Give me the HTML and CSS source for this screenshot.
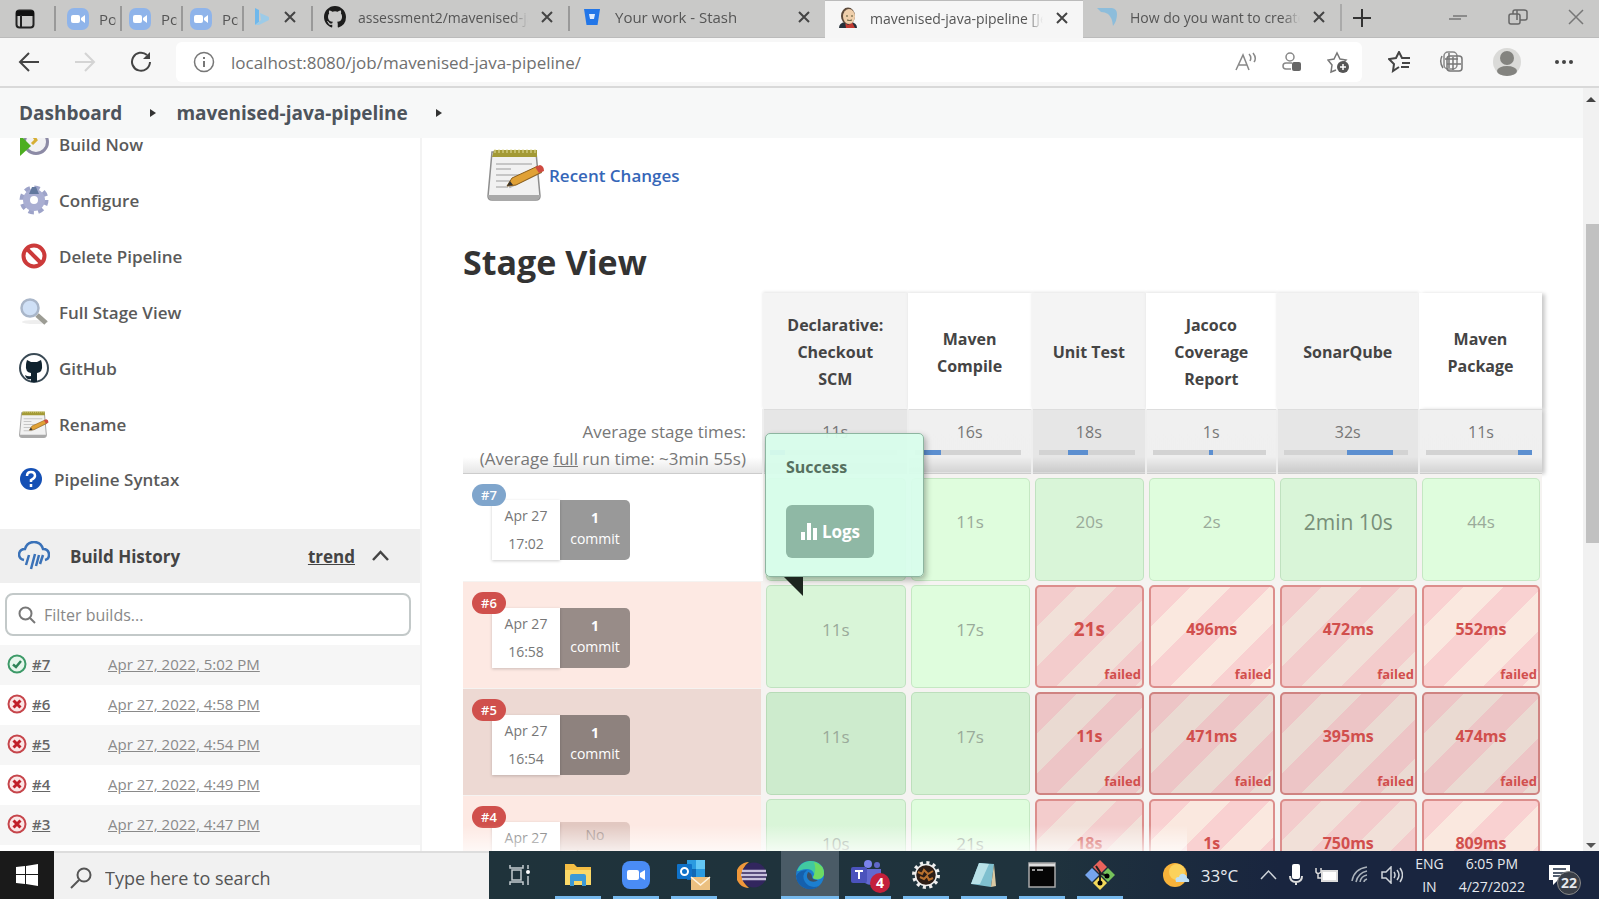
FILE: index.html
```html
<!DOCTYPE html>
<html lang="en">
<head>
<meta charset="utf-8">
<title>mavenised-java-pipeline [Jenkins]</title>
<link rel="stylesheet" href="styles.css">
</head>
<body>
<svg class="defs" aria-hidden="true">
  <symbol id="x" viewBox="0 0 14 14"><path d="M2 2l10 10M12 2L2 12" stroke="currentColor" stroke-width="2" fill="none"/></symbol>
  <symbol id="cam" viewBox="0 0 22 22"><rect width="22" height="22" rx="7" fill="#8fb4ea"/><rect x="4" y="7" width="9" height="8" rx="2" fill="#fff"/><path d="M14 10l4-3v8l-4-3z" fill="#fff"/></symbol>
  <symbol id="octo" viewBox="0 0 16 16"><path d="M8 0C3.58 0 0 3.58 0 8c0 3.54 2.29 6.53 5.47 7.59.4.07.55-.17.55-.38 0-.19-.01-.82-.01-1.49-2.01.37-2.53-.49-2.69-.94-.09-.23-.48-.94-.82-1.13-.28-.15-.68-.52-.01-.53.63-.01 1.08.58 1.23.82.72 1.21 1.87.87 2.33.66.07-.52.28-.87.51-1.07-1.78-.2-3.64-.89-3.64-3.95 0-.87.31-1.59.82-2.15-.08-.2-.36-1.02.08-2.12 0 0 .67-.21 2.2.82a7.6 7.6 0 0 1 4 0c1.53-1.04 2.2-.82 2.2-.82.44 1.1.16 1.92.08 2.12.51.56.82 1.27.82 2.15 0 3.07-1.87 3.75-3.65 3.95.29.25.54.73.54 1.48 0 1.07-.01 1.93-.01 2.2 0 .21.15.46.55.38A8 8 0 0 0 16 8c0-4.42-3.58-8-8-8z" fill="currentColor"/></symbol>
  <symbol id="note" viewBox="0 0 58 56"><path d="M5 5h44l4 44q0 4-4 4H5q-4 0-4-4z" fill="#f1f1f1" stroke="#8d8d8d" stroke-width="1.5"/><path d="M1 48q0 5 4 5h44q4 0 4-5z" fill="#a9a9a9"/><path d="M7 3h43v7H5z" fill="#a39a35"/><path d="M8 2v4m4-4v4m4-4v4m4-4v4m4-4v4m4-4v4m4-4v4m4-4v4m4-4v4m4-4v4m4-4v4" stroke="#e4dfa0" stroke-width="1"/><path d="M9 17h36M9 22h15M9 28h24M9 34h15M9 40h12" stroke="#c6c6c6" stroke-width="2"/><path d="M22 40l32-15" stroke="#777" stroke-width="3" opacity=".5"/><path d="M20 39l5-8 26-12 4 6-26 13z" fill="#e0a136" stroke="#8b5e1b" stroke-width="1"/><path d="M48 20l5-2q4 1 4 6l-5 2z" fill="#cf4b40"/><path d="M20 39l3-5 3 4z" fill="#333"/></symbol>
  <symbol id="ok" viewBox="0 0 20 20"><circle cx="10" cy="10" r="8.5" fill="#e6f6ec" stroke="#3d9a68" stroke-width="2"/><path d="M6 10.500l3 2.500 5-6" fill="none" stroke="#2f8458" stroke-width="2.500"/></symbol>
  <symbol id="bad" viewBox="0 0 20 20"><circle cx="10" cy="10" r="8.5" fill="#fbe6e6" stroke="#c6454b" stroke-width="2"/><path d="M6.500 6.500l7 7m0-7l-7 7" fill="none" stroke="#c11f29" stroke-width="3"/></symbol>
</svg>

<div class="window">
  <header class="tabs">
    <button class="tabmenu" aria-label="Tab actions"><svg width="20" height="20" viewBox="0 0 20 20"><rect x="1.500" y="1.500" width="17" height="17" rx="3" fill="none" stroke="#222" stroke-width="2"/><path d="M1 2h18v5H1z" fill="#111"/><path d="M6 6v12" stroke="#222" stroke-width="2"/></svg></button>
    <div class="tab mini first"><svg width="22" height="22"><use href="#cam"/></svg><span>Po</span></div>
    <div class="tab mini"><svg width="22" height="22"><use href="#cam"/></svg><span>Po</span></div>
    <div class="tab mini"><svg width="22" height="22"><use href="#cam"/></svg><span>Po</span></div>
    <div class="tab bing"><svg width="16" height="20" viewBox="0 0 16 20"><path d="M1 1l4 2v12l-4 3z" fill="#6fb8ec"/><path d="M6 6l9 4v3L5 18l-4 0 6-5z" fill="#9ccbe8"/></svg><button aria-label="Close tab"><svg width="14" height="14"><use href="#x"/></svg></button></div>
    <div class="tab t1"><svg width="22" height="22" color="#1c1c1c"><use href="#octo"/></svg><span>assessment2/mavenised-java</span><button aria-label="Close tab"><svg width="14" height="14"><use href="#x"/></svg></button></div>
    <div class="tab t2"><svg width="18" height="18" viewBox="0 0 18 18"><path d="M1 1h16l-2.500 16h-11z" fill="#2276e8"/><path d="M6 6h6l-1 5H7z" fill="#dcebff"/></svg><span>Your work - Stash</span><button aria-label="Close tab"><svg width="14" height="14"><use href="#x"/></svg></button></div>
    <div class="tab active"><svg width="20" height="22" viewBox="0 0 20 22"><path d="M1 21q0-5 6-6h6q6 1 6 6z" fill="#26303a"/><path d="M7 15l3 3 4-3 3 6H8z" fill="#c23b32"/><ellipse cx="10" cy="9" rx="7" ry="8.5" fill="#5d4a3b"/><ellipse cx="11" cy="9.500" rx="6" ry="7.500" fill="#efcfab"/><path d="M8 9h2m3 0h2M9 13q3 1 5 0" stroke="#553" fill="none"/></svg><span>mavenised-java-pipeline [Jenkins]</span><button aria-label="Close tab"><svg width="14" height="14"><use href="#x"/></svg></button></div>
    <div class="tab t4"><svg width="22" height="20" viewBox="0 0 22 20"><path d="M1 1h15q5 1 5 6 0 7-4 12-1-9-5-12-3-2-7-2z" fill="#8dbddb"/></svg><span>How do you want to create</span><button aria-label="Close tab"><svg width="14" height="14"><use href="#x"/></svg></button></div>
    <button class="plus" aria-label="New tab"><svg width="20" height="20" viewBox="0 0 20 20"><path d="M10 1v18M1 10h18" stroke="#333" stroke-width="2"/></svg></button>
    <div class="winctl">
      <button aria-label="Minimize"><svg width="20" height="14" viewBox="0 0 20 14"><path d="M5 6h14M1 9h12" stroke="#777" stroke-width="1.500"/></svg></button>
      <button aria-label="Restore"><svg width="20" height="18" viewBox="0 0 20 18"><rect x="1" y="6" width="11" height="10" rx="2" fill="none" stroke="#666" stroke-width="1.500"/><path d="M5 6V4q0-2 2-2h9q3 0 3 2v6q0 2-2 2h-5M9 2v10" fill="none" stroke="#666" stroke-width="1.500"/></svg></button>
      <button aria-label="Close"><svg width="16" height="16" viewBox="0 0 16 16"><path d="M1 1l14 14M15 1L1 15" stroke="#777" stroke-width="1.500"/></svg></button>
    </div>
  </header>

  <nav class="toolbar">
    <button aria-label="Back"><svg width="22" height="20" viewBox="0 0 22 20"><path d="M21 10H2m9-9l-9 9 9 9" fill="none" stroke="#444" stroke-width="2"/></svg></button>
    <button aria-label="Forward"><svg width="22" height="20" viewBox="0 0 22 20"><path d="M1 10h19m-9-9l9 9-9 9" fill="none" stroke="#d4d4d4" stroke-width="2"/></svg></button>
    <button aria-label="Reload"><svg width="22" height="22" viewBox="0 0 22 22"><path d="M20 11a9 9 0 1 1-3-7" fill="none" stroke="#444" stroke-width="2"/><path d="M20 1v7h-7z" fill="#444"/></svg></button>
    <div class="address">
      <svg width="22" height="22" viewBox="0 0 22 22"><circle cx="11" cy="11" r="9.500" fill="none" stroke="#777" stroke-width="1.500"/><path d="M11 10v6M11 6v2" stroke="#777" stroke-width="2"/></svg>
      <input aria-label="Address" value="localhost:8080/job/mavenised-java-pipeline/">
      <button aria-label="Read aloud"><svg width="22" height="20" viewBox="0 0 22 20"><path d="M1 18L8 3l6 15M4 13h8M14 2q3 3 1 7M18 1q4 5 1 9" fill="none" stroke="#888" stroke-width="1.500"/></svg></button>
      <button aria-label="Tracking"><svg width="20" height="20" viewBox="0 0 20 20"><circle cx="8" cy="5" r="4" fill="none" stroke="#888" stroke-width="1.500"/><path d="M9 17H4q-3 0-3-3 0-3 3-3h6" fill="none" stroke="#888" stroke-width="1.500"/><rect x="10" y="10" width="9" height="9" rx="2" fill="#666"/></svg></button>
      <button aria-label="Add favorite"><svg width="23" height="23" viewBox="0 0 23 23"><path d="M9 19l-5 2 1-7-4-5 6-1 3-6 3 6 6 1-3 3" fill="none" stroke="#777" stroke-width="1.500"/><circle cx="16" cy="16" r="6" fill="#555"/><path d="M16 13v6m-3-3h6" stroke="#fff" stroke-width="1.500"/></svg></button>
    </div>
    <div class="tools">
      <button aria-label="Favorites"><svg width="23" height="22" viewBox="0 0 23 22"><path d="M11 16l-6 4 1-7-5-5 7-1 3-6 3 6h8M14 12h8M13 16h8" fill="none" stroke="#444" stroke-width="2"/></svg></button>
      <button aria-label="Collections"><svg width="26" height="26" viewBox="0 0 26 26"><rect x="5" y="3" width="13" height="17" rx="4" fill="none" stroke="#888" stroke-width="1.500"/><rect x="8" y="7" width="15" height="15" rx="3" fill="none" stroke="#777" stroke-width="1.500"/><path d="M3 7q-3 6 1 12M10 4v15M14 8v13M6 10h13M8 15h14" fill="none" stroke="#777" stroke-width="1.500"/></svg></button>
      <button aria-label="Profile"><svg width="28" height="30" viewBox="0 0 28 30"><circle cx="14" cy="15" r="14" fill="#dadad8"/><circle cx="14" cy="11" r="7" fill="#83837f"/><ellipse cx="14" cy="24" rx="10" ry="5" fill="#83837f"/></svg></button>
      <button aria-label="More"><svg width="20" height="6" viewBox="0 0 20 6"><circle cx="3" cy="3" r="2" fill="#444"/><circle cx="10" cy="3" r="2" fill="#444"/><circle cx="17" cy="3" r="2" fill="#444"/></svg></button>
    </div>
  </nav>

  <div class="viewport">
    <div class="page">
      <nav class="crumbs"><a href="#">Dashboard</a><i></i><a href="#">mavenised-java-pipeline</a><i></i></nav>
      <div class="columns">
        <aside class="side">
          <ul class="tasks">
            <li><a href="#"><svg width="30" height="30" viewBox="0 0 30 30"><circle cx="17" cy="13" r="11.500" fill="#f1f1f3" stroke="#8c8aa5" stroke-width="3"/><path d="M12 3l5 8-4 4" fill="none" stroke="#d6ae32" stroke-width="3"/><path d="M1 6l11 11L1 27z" fill="#4cae20"/></svg>Build Now</a></li>
            <li><a href="#"><svg width="30" height="30" viewBox="0 0 30 30"><circle cx="15" cy="15" r="11.500" fill="none" stroke="#9da3c9" stroke-width="6" stroke-dasharray="5 4.030"/><circle cx="15" cy="15" r="7.500" fill="none" stroke="#a9aed2" stroke-width="7"/><path d="M10 9l3-7h4l3 7z" fill="#62789e"/></svg>Configure</a></li>
            <li><a href="#"><svg width="30" height="30" viewBox="0 0 30 30"><circle cx="15" cy="15" r="10.500" fill="#fff" stroke="#cc3a3a" stroke-width="4"/><path d="M8 8l14 14" stroke="#cc3a3a" stroke-width="4"/></svg>Delete Pipeline</a></li>
            <li><a href="#"><svg width="30" height="30" viewBox="0 0 30 30"><ellipse cx="16" cy="25" rx="13" ry="2" fill="#eee"/><path d="M18 18l9 8" stroke="#9c9c94" stroke-width="5"/><circle cx="11" cy="11" r="8.500" fill="#cfe0f6" stroke="#a9b6c9" stroke-width="2.500"/></svg>Full Stage View</a></li>
            <li><a href="#"><svg width="30" height="30" viewBox="0 0 30 30"><circle cx="15" cy="15" r="14" fill="#fff" stroke="#3a4a55" stroke-width="2"/><path d="M8 7l4 2h6l4-2q1 3 1 5 1 7-5 8v9h-6v-3q-5 1-6-4 3 2 6 1v-3q-6-1-5-8 0-2 1-5z" fill="#10232f"/></svg>GitHub</a></li>
            <li><a href="#"><svg width="30" height="29"><use href="#note"/></svg>Rename</a></li>
            <li><a class="help" href="#"><svg width="24" height="24" viewBox="0 0 24 24"><circle cx="12" cy="12" r="11" fill="#1550b5"/><path d="M8 9q0-4 4-4t4 4q0 2-4 4v2M12 17v3" fill="none" stroke="#fff" stroke-width="2.500"/></svg>Pipeline Syntax</a></li>
          </ul>
          <section class="history">
            <div class="hhead"><svg width="32" height="30" viewBox="0 0 32 30"><path d="M6 19q-5-1-5-6 1-5 6-5 2-7 9-7t9 7q6 0 6 6 0 4-4 5" fill="none" stroke="#3a72b8" stroke-width="2.500"/><path d="M11 14l-3 10M17 13l-4 15M21 14l-3 11M25 14l-3 9" stroke="#3a72b8" stroke-width="2.500"/></svg><h2>Build History</h2><a href="#">trend</a><button aria-label="Collapse"><svg width="17" height="12" viewBox="0 0 17 12"><path d="M1 10l7.500-8L16 10" fill="none" stroke="#444" stroke-width="2.500"/></svg></button></div>
            <label class="filter"><svg width="18" height="18" viewBox="0 0 18 18"><circle cx="7.500" cy="7.500" r="6" fill="none" stroke="#777" stroke-width="2"/><path d="M12 12l5 5" stroke="#777" stroke-width="2"/></svg><input type="text" placeholder="Filter builds..." aria-label="Filter builds"></label>
            <ul class="builds">
              <li><svg width="20" height="20"><use href="#ok"/></svg><a class="n" href="#">#7</a><a href="#">Apr 27, 2022, 5:02 PM</a></li>
              <li><svg width="20" height="20"><use href="#bad"/></svg><a class="n" href="#">#6</a><a href="#">Apr 27, 2022, 4:58 PM</a></li>
              <li><svg width="20" height="20"><use href="#bad"/></svg><a class="n" href="#">#5</a><a href="#">Apr 27, 2022, 4:54 PM</a></li>
              <li><svg width="20" height="20"><use href="#bad"/></svg><a class="n" href="#">#4</a><a href="#">Apr 27, 2022, 4:49 PM</a></li>
              <li><svg width="20" height="20"><use href="#bad"/></svg><a class="n" href="#">#3</a><a href="#">Apr 27, 2022, 4:47 PM</a></li>
            </ul>
          </section>
        </aside>

        <main class="main">
          <a class="recent" href="#"><svg width="58" height="56"><use href="#note"/></svg>Recent Changes</a>
          <h1>Stage View</h1>
          <table class="stages">
            <colgroup><col class="c0"><col class="c1"><col class="c2"><col class="c3"><col class="c4"><col class="c5"><col class="c6"></colgroup>
            <thead>
              <tr class="names"><td></td><th>Declarative: Checkout SCM</th><th>Maven Compile</th><th>Unit Test</th><th>Jacoco Coverage Report</th><th>SonarQube</th><th>Maven Package</th></tr>
              <tr class="avg">
                <td>Average stage times:<br>(Average <u>full</u> run time: ~3min 55s)</td>
                <td>11s<div class="bar"><b style="margin-left:0%;width:12%"></b></div></td>
                <td>16s<div class="bar"><b style="margin-left:8%;width:17%"></b></div></td>
                <td>18s<div class="bar"><b style="margin-left:30%;width:21%"></b></div></td>
                <td>1s<div class="bar"><b style="margin-left:50%;width:3%"></b></div></td>
                <td>32s<div class="bar"><b style="margin-left:51%;width:37%"></b></div></td>
                <td>11s<div class="bar"><b style="margin-left:87%;width:13%"></b></div></td>
              </tr>
            </thead>
            <tbody>
              <tr class="r7">
                <td><div class="run"><span class="badge">#7</span><div class="when">Apr 27<br>17:02</div><div class="commit"><b>1</b><br>commit</div></div></td>
                <td><div class="cell"><span>12s</span></div>
                  <div class="popup"><p>Success</p><button><svg width="18" height="18" viewBox="0 0 18 18"><path d="M1 10h4v8H1zM7 1h4v17H7zM13 6h4v12h-4z" fill="#fff"/></svg>Logs</button></div></td>
                <td><div class="cell"><span>11s</span></div></td>
                <td><div class="cell"><span>20s</span></div></td>
                <td><div class="cell"><span>2s</span></div></td>
                <td><div class="cell long"><span>2min 10s</span></div></td>
                <td><div class="cell"><span>44s</span></div></td>
              </tr>
              <tr class="fail">
                <td><div class="run"><span class="badge">#6</span><div class="when">Apr 27<br>16:58</div><div class="commit"><b>1</b><br>commit</div></div></td>
                <td><div class="cell"><span>11s</span></div></td>
                <td><div class="cell"><span>17s</span></div></td>
                <td><div class="cell f big"><span>21s</span><em>failed</em></div></td>
                <td><div class="cell f"><span>496ms</span><em>failed</em></div></td>
                <td><div class="cell f"><span>472ms</span><em>failed</em></div></td>
                <td><div class="cell f"><span>552ms</span><em>failed</em></div></td>
              </tr>
              <tr class="fail dim">
                <td><div class="run"><span class="badge">#5</span><div class="when">Apr 27<br>16:54</div><div class="commit"><b>1</b><br>commit</div></div></td>
                <td><div class="cell"><span>11s</span></div></td>
                <td><div class="cell"><span>17s</span></div></td>
                <td><div class="cell f"><span>11s</span><em>failed</em></div></td>
                <td><div class="cell f"><span>471ms</span><em>failed</em></div></td>
                <td><div class="cell f"><span>395ms</span><em>failed</em></div></td>
                <td><div class="cell f"><span>474ms</span><em>failed</em></div></td>
              </tr>
              <tr class="fail">
                <td><div class="run"><span class="badge">#4</span><div class="when">Apr 27<br>16:49</div><div class="commit none">No<br>Changes</div></div></td>
                <td><div class="cell"><span>10s</span></div></td>
                <td><div class="cell"><span>21s</span></div></td>
                <td><div class="cell f"><span>18s</span><em>failed</em></div></td>
                <td><div class="cell f"><span>1s</span><em>failed</em></div></td>
                <td><div class="cell f"><span>750ms</span><em>failed</em></div></td>
                <td><div class="cell f"><span>809ms</span><em>failed</em></div></td>
              </tr>
            </tbody>
          </table>
        </main>
      </div>
    </div>
    <div class="scroll"><i class="up"></i><div class="track"><div class="thumb"></div></div><i class="down"></i></div>
  </div>

  <footer class="taskbar">
    <button class="start" aria-label="Start"><svg width="22" height="22" viewBox="0 0 22 22"><path d="M0 3l9-1v8H0zM10 2l12-2v10H10zM0 11h9v9l-9-1zM10 11h12v11l-12-2z" fill="#fff"/></svg></button>
    <label class="find"><svg width="22" height="22" viewBox="0 0 22 22"><circle cx="14" cy="8" r="6.500" fill="none" stroke="#555" stroke-width="2"/><path d="M9 13l-8 8" stroke="#555" stroke-width="2"/></svg><input type="text" placeholder="Type here to search" aria-label="Search"></label>
    <div class="apps">
      <button class="idle" aria-label="Task View"><svg width="24" height="22" viewBox="0 0 24 22"><path d="M2 1v3h13V1M2 21v-3h13v3M4 6h9v10H4zM20 1v4M20 12v9" fill="none" stroke="#c4ccd0" stroke-width="1.500"/><circle cx="20" cy="8" r="2" fill="#fff"/></svg></button>
      <button aria-label="Explorer"><svg width="28" height="26" viewBox="0 0 28 26"><path d="M1 2h9l3 3h14v18H1z" fill="#f4bd43"/><path d="M1 8h26v15H1z" fill="#fbd968"/><path d="M6 24V14q0-2 2-2h12q2 0 2 2v10h-4v-5h-8v5z" fill="#3d9ad6"/></svg></button>
      <button aria-label="Zoom"><svg width="28" height="28" viewBox="0 0 28 28"><rect width="28" height="28" rx="8" fill="#4a8cf5"/><rect x="5" y="9" width="12" height="10" rx="2" fill="#fff"/><path d="M18 12l5-3v10l-5-3z" fill="#fff"/></svg></button>
      <button aria-label="Outlook"><svg width="34" height="32" viewBox="0 0 34 32"><path d="M10 1h18v20H10z" fill="#2b9be0"/><path d="M19 1h9v9h-9z" fill="#63c7f5"/><path d="M10 10h9v11h-9z" fill="#1269b5"/><rect y="5" width="15" height="15" rx="1" fill="#0f72c9"/><circle cx="7.500" cy="12.500" r="3.500" fill="none" stroke="#fff" stroke-width="2"/><path d="M14 18h19v13H14z" fill="#ecc080"/><path d="M14 18l9.500 8 9.500-8" fill="none" stroke="#fff4e0" stroke-width="1.500"/></svg></button>
      <button class="idle" aria-label="Eclipse"><svg width="30" height="28" viewBox="0 0 30 28"><path d="M12 1A13 13 0 0 0 12 27 16 16 0 0 1 12 1z" fill="#f0983a"/><circle cx="17" cy="14" r="12.500" fill="#32265e"/><path d="M5 10h24M4 14h26M5 18h24" stroke="#c9c3de" stroke-width="2.500"/></svg></button>
      <button class="cur" aria-label="Edge"><svg width="30" height="30" viewBox="0 0 30 30"><circle cx="15" cy="15" r="14" fill="#1c7fd0"/><path d="M2 11C5 3 11 1 16 1c8 0 14 6 13 13-1 6-8 7-11 4 3-5-1-9-6-9-4 0-8 2-10 2z" fill="#42c9a0"/><path d="M19 2q10 3 10 12-1 5-7 5-4 0-4-2 4-6 1-15z" fill="#6edb62"/><path d="M12 10q-6 5-2 12 5 7 14 4-5 4-12 3Q2 26 1 16q3-6 11-6z" fill="#1560ad"/><path d="M13 12q4 1 4 5 0 3 6 3-3 3-8 1-5-3-2-9z" fill="#3d5064"/></svg></button>
      <button aria-label="Teams, 4 new"><svg width="34" height="32" viewBox="0 0 34 32"><circle cx="17" cy="5" r="4" fill="#7b83eb"/><circle cx="26" cy="6" r="3" fill="#6067c9"/><path d="M11 10h19v8q-1 8-9 8-9 0-10-8z" fill="#6369cf"/><rect y="8" width="16" height="16" rx="2" fill="#4b53bc"/><path d="M4 12h8M8 12v8" stroke="#fff" stroke-width="2"/></svg><span class="count">4</span></button>
      <button aria-label="Tool"><svg width="28" height="28" viewBox="0 0 28 28"><circle cx="14" cy="14" r="12" fill="none" stroke="#eee" stroke-width="4" stroke-dasharray="3 3.283"/><circle cx="14" cy="14" r="10.500" fill="#2c1d16" stroke="#eee" stroke-width="1.500"/><path d="M6 11l4 2 2-4 4 4 5-3M8 16l4 2 3-3 2 4 4-2" stroke="#b8702e" stroke-width="2" fill="none"/></svg></button>
      <button aria-label="Notepad"><svg width="28" height="28" viewBox="0 0 28 28"><path d="M9 2l15 1-3 23-20-3z" fill="#7fc0cf"/><path d="M9 2l10 1-9 20-9 0z" fill="#b9e2e8"/><path d="M24 3l2 22-5 1z" fill="#d9c9a3"/></svg></button>
      <button aria-label="Command Prompt"><svg width="28" height="26" viewBox="0 0 28 26"><rect x="1" y="1" width="26" height="24" fill="#050505" stroke="#a9a9a9" stroke-width="1.500"/><path d="M1 3h26" stroke="#ddd" stroke-width="3"/><path d="M4 8h3m2 0h6" stroke="#ccc" stroke-width="1.500"/></svg></button>
      <button aria-label="Git"><svg width="30" height="30" viewBox="0 0 30 30"><path d="M15 0l7 7-7 7-7-7z" fill="#e9635c"/><path d="M7 8l7 7-7 7-7-7z" fill="#76a5ee"/><path d="M23 8l7 7-7 7-7-7z" fill="#76c25b"/><path d="M15 16l7 7-7 7-7-7z" fill="#f3d95a"/><path d="M11 6l4 6v11M15 13l7 3" stroke="#222" stroke-width="2" fill="none"/><circle cx="15" cy="23" r="2.500"/><circle cx="22" cy="16" r="2.500"/></svg></button>
    </div>
    <div class="tray">
      <svg width="28" height="26" viewBox="0 0 28 26"><circle cx="12" cy="13" r="12" fill="#f8b33a"/><circle cx="14" cy="10" r="8" fill="#fbd25c"/><path d="M13 20q-2-5 3-5 1-4 5-3 3 1 3 4 3 1 2 4z" fill="#bfe0f5"/></svg>
      <span class="temp">33°C</span>
      <svg width="17" height="12" viewBox="0 0 17 12"><path d="M1 10l7.500-8L16 10" fill="none" stroke="#cfd4da" stroke-width="1.500"/></svg>
      <svg width="14" height="22" viewBox="0 0 14 22"><rect x="3" width="8" height="15" rx="2" fill="#fff"/><path d="M1 12q0 6 6 6t6-6M7 17v4" fill="none" stroke="#ddd" stroke-width="2"/></svg>
      <svg width="24" height="16" viewBox="0 0 24 16"><rect x="7" y="4" width="15" height="10" fill="#fff" stroke="#ddd" stroke-width="2"/><path d="M1 1v4q2 3 5 0V1M3 6v5h4" fill="none" stroke="#ddd" stroke-width="1.500"/></svg>
      <svg width="18" height="18" viewBox="0 0 18 18"><path d="M1 15Q3 3 16 1M5 16Q7 7 16 5M9 16q1-6 7-7M13 16q0-2 3-3" fill="none" stroke="#aab2bb" stroke-width="1.500"/></svg>
      <svg width="22" height="18" viewBox="0 0 22 18"><path d="M1 6h4l5-5v16l-5-5H1zM13 6q2 3 0 6M16 4q4 5 0 10M19 2q5 7 0 14" fill="none" stroke="#cfd4da" stroke-width="1.500"/></svg>
      <span class="two lang">ENG<br>IN</span>
      <span class="two">6:05 PM<br>4/27/2022</span>
      <span class="notif"><svg width="22" height="22" viewBox="0 0 22 22"><path d="M0 1h21v15H9l-5 5v-5H0z" fill="#fff"/><path d="M4 5h13M4 9h13M4 12h7" stroke="#1b2a40" stroke-width="1.500"/></svg><b>22</b></span>
    </div>
  </footer>
</div>
</body>
</html>
```
FILE: styles.css
```css
* { box-sizing: border-box; }
body { margin: 0; font-family: "Open Sans", "Noto Sans", sans-serif; font-size: 16px; color: #444; background: #fff; }
button { border: 0; background: none; padding: 0; margin: 0; font: inherit; color: inherit; display: flex; align-items: center; justify-content: center; }
input { border: 0; outline: 0; background: none; font: inherit; color: inherit; min-width: 0; flex: 1; padding: 0; }
ul { list-style: none; margin: 0; padding: 0; }
a { color: inherit; text-decoration: none; }
svg { flex: none; display: block; }
.defs { position: absolute; width: 0; height: 0; }
.window { height: 100vh; display: flex; flex-direction: column; overflow: hidden; }

/* tab strip */
.tabs { flex: none; height: 38px; display: flex; align-items: stretch; background: #c9c9c8; color: #555; font-size: 15px; border-bottom: 1px solid #bbb; }
.tabmenu { width: 54px; padding-right: 5px; }
.tab { display: flex; align-items: center; position: relative; padding: 0 14px 3px 13px; gap: 12px; white-space: nowrap; }
.tab::before { content: ""; position: absolute; left: 0; top: 6px; height: 25px; width: 2px; background: #999; }
.tab span { flex: 1; min-width: 0; overflow: hidden; -webkit-mask-image: linear-gradient(90deg, #000 90%, transparent); mask-image: linear-gradient(90deg, #000 90%, transparent); }
.tab button { color: #444; width: 14px; }
.mini { width: 61px; padding: 3px 4px 3px 9px; gap: 10px; }
.mini.first { width: 66px; padding-left: 13px; }
.bing { width: 69px; padding-left: 12px; justify-content: space-between; }
.t1 { width: 257px; font-size: 14px; }
.t2 { width: 257px; padding-left: 15px; gap: 14px; }
.active { width: 258px; background: #f6f6f6; margin-bottom: -1px; border-top: 1px solid #bbb; font-size: 14px; }
.t4 { width: 257px; font-size: 14px; }
.active::before, .t4::before { display: none; }
.plus { width: 46px; padding-right: 4px; border-left: 2px solid #aaa; margin-bottom: 6px; margin-top: 4px; }
.winctl { margin-left: auto; display: flex; gap: 40px; padding: 0 15px 4px 0; }

/* toolbar */
.toolbar { flex: none; height: 50px; display: flex; align-items: center; padding: 0 25px 0 18px; background: #f7f7f7; border-bottom: 2px solid #d9d9d9; }
.toolbar > button { width: 22px; margin-right: 34px; }
.toolbar > button:nth-child(3) { margin-right: 24px; }
.address { flex: 1; height: 40px; border-radius: 6px; background: #fff; display: flex; align-items: center; gap: 25px; padding: 0 12px 0 17px; color: #707070; font-size: 17px; }
.address input { margin-left: -9px; }
.tools { display: flex; align-items: center; gap: 28px; padding-left: 26px; }
.tools button:last-child { padding-left: 5px; }

/* document area */
.viewport { flex: 1; min-height: 0; display: flex; }
.page { flex: 1; min-width: 0; display: flex; flex-direction: column; overflow: hidden; position: relative; }
.page::after { content: ""; position: absolute; left: 27%; right: 25%; bottom: 0; height: 26px; background: linear-gradient(transparent, rgba(255,255,255,.7)); }
.crumbs { flex: none; height: 50px; display: flex; align-items: center; padding-left: 19px; background: #f7f8f8; font-size: 19px; font-weight: 700; color: #4d545c; }
.crumbs i { margin: 0 20px 0 28px; border-left: 6px solid #333; border-top: 4px solid transparent; border-bottom: 4px solid transparent; }
.columns { flex: 1; min-height: 0; display: flex; overflow: hidden; }
.side { flex: none; width: 422px; border-right: 2px solid #f3f3f3; }
.tasks { margin-top: -22px; font-size: 17px; font-weight: 600; color: #5a5a5a; }
.tasks a { height: 56px; display: flex; align-items: center; gap: 10px; padding-left: 19px; }
.tasks a.help { height: 54px; gap: 11px; }
.history { margin-top: 23px; }
.hhead { height: 54px; background: #efefef; display: flex; align-items: center; padding: 0 31px 0 18px; color: #444; font-weight: 700; font-size: 17px; }
.hhead h2 { font-size: 17px; margin: 0 auto 0 20px; }
.hhead a { text-decoration: underline; margin-right: 17px; }
.filter { display: flex; align-items: center; gap: 8px; height: 43px; margin: 10px 9px 9px 5px; padding: 0 11px; border: 2px solid #c3c9c9; border-radius: 8px; font-size: 16px; }
::placeholder { color: #888; opacity: 1; }
.builds li { height: 40px; display: flex; align-items: center; padding: 0 0 2px 7px; font-size: 15px; color: #8a8a8a; }
.builds li:nth-child(odd) { background: #f6f6f6; }
.builds a { text-decoration: underline; }
.builds .n { width: 76px; margin-left: 5px; color: #666; font-weight: 600; }

/* main column */
.main { flex: 1; min-width: 0; padding: 9px 41px 0 41px; }
.recent { display: flex; align-items: center; gap: 4px; padding-left: 24px; color: #3566b8; font-weight: 600; font-size: 17px; }
h1 { margin: 35px 0 7px; font-size: 34px; line-height: 48px; color: #333; font-weight: 700; }
.stages { width: 100%; table-layout: fixed; border-collapse: collapse; text-align: center; }
.c0 { width: 27.8%; } .c1 { width: 13.4%; } .c2 { width: 11.5%; } .c3 { width: 10.6%; } .c4 { width: 12.1%; } .c5 { width: 13.2%; } .c6 { width: 11.4%; }
td, th { padding: 0; }
.names th { height: 116px; padding: 4px 16px 0; font-size: 16px; line-height: 27px; font-weight: 700; color: #444; box-shadow: 0 -1px 3px #e4e4e4; }
.names th:nth-child(even) { background: #f4f4f4; }
.names th:nth-child(odd) { background: #fff; }
.names th:last-child, .avg td:last-child, tbody td:last-child { box-shadow: 3px 1px 4px #c9c9c9; }
.avg td { height: 64px; padding-top: 9px; vertical-align: top; line-height: 27px; color: #777; background: linear-gradient(#f0f0f0, #efefef 75%, #d2d2d2); border-top: 1px solid #ddd; border-bottom: 1px solid #ccc; }
.avg td:nth-child(even) { background: linear-gradient(#e6e6e6, #e6e6e6 75%, #cacaca); }
.avg td:first-child { text-align: right; padding-right: 16px; font-size: 17px; background: linear-gradient(#fff 75%, #e6e6e6); border-top: 0; }
.avg td + td { border-left: 2px solid #eee; }
.bar { margin: 4px 10px 0 6px; height: 5px; background: #d3d3d3; }
.bar b { display: block; height: 5px; background: #5c8fd0; }
tbody td { height: 107px; vertical-align: top; position: relative; background: #f5f3f1; }
tbody td + td { padding: 4px 2px 0 3px; }
.r7 td { height: 108px; }
.r7 td:first-child { background: #fff; }
.run { display: flex; height: 106px; padding: 26px 0 20px 29px; position: relative; font-size: 14px; color: #777; margin-right: 2px; }
.fail .run { background: #fde9e3; margin-top: 1px; }
.dim .run { background: #edd9d3; }
.badge { position: absolute; left: 9px; top: 10px; width: 34px; height: 22px; border-radius: 11px; background: #d0504c; color: #fff; font-size: 13px; line-height: 22px; font-weight: 600; }
.r7 .badge { background: #7fa5cc; }
.when { width: 68px; height: 60px; background: #fff; line-height: 28px; padding-top: 2px; box-shadow: 0 1px 3px rgba(0,0,0,.2); }
.commit { width: 70px; height: 60px; background: rgba(0,0,0,.4); color: #fff; border-radius: 0 5px 5px 0; line-height: 21px; padding-top: 7px; }
.commit.none { background: rgba(120,70,60,.2); color: #a08d88; padding-top: 2px; }
.cell { height: 103px; border: 1px solid rgba(120,170,120,.25); border-radius: 5px; background: #dffddd; display: grid; color: #9aaa9a; font-size: 17px; }
td:nth-child(even) .cell { background: #d9f5d8; }
.dim .cell { background: #d4f1d3; }
.dim td:nth-child(even) .cell { background: #cdebcd; }
.cell > * { grid-area: 1 / 1; }
.cell span { place-self: center; padding-bottom: 15px; }
.cell em { place-self: end; font-style: normal; font-size: 13px; font-weight: 700; padding: 0 1px 3px 0; }
.cell.long { font-size: 21px; color: #788f78; }
.cell.f { border: 2px solid #dc8e8c; background: repeating-linear-gradient(135deg, #f9d1d1 0 28px, #fae8df 28px 56px); color: #d14f4d; font-size: 16px; font-weight: 700; }
td:nth-child(even) .cell.f { background: repeating-linear-gradient(135deg, #f3cccc 0 28px, #f1e0d8 28px 56px); }
.dim .cell.f, .dim td:nth-child(even) .cell.f { background: repeating-linear-gradient(135deg, #edc5c6 0 28px, #eadad2 28px 56px); border-color: #cf8381; }
.cell.big { font-size: 19px; }
.popup { position: absolute; z-index: 2; left: 2px; top: -41px; width: 159px; height: 144px; padding: 20px; text-align: left; background: rgba(216,253,235,.95); border: 1px solid #8db5a0; border-radius: 5px; box-shadow: 2px 3px 6px rgba(0,0,0,.3); }
.popup::after { content: ""; position: absolute; left: 18px; top: 143px; border-top: 19px solid #1d261f; border-left: 19px solid transparent; }
.popup p { margin: 0 0 25px; line-height: 26px; font-weight: 700; font-size: 16px; color: #56705f; }
.popup button { width: 88px; height: 53px; gap: 4px; border-radius: 6px; background: #8fb8a5; color: #fff; font-weight: 700; font-size: 17px; }

/* scrollbar */
.scroll { flex: none; width: 16px; background: #f1f1f1; display: flex; flex-direction: column; align-items: center; padding: 9px 0 3px; }
.scroll i { border: 5px solid transparent; }
.scroll .up { border-top: 0; border-bottom-color: #444; }
.scroll .down { border-bottom: 0; border-top-color: #555; }
.track { flex: 1; width: 100%; padding: 3px 0 0 3px; display: flex; flex-direction: column; }
.track::before { content: ""; flex: 118; }
.track::after { content: ""; flex: 298; }
.thumb { flex: 317; background: #c1c1c1; }

/* taskbar */
.taskbar { flex: none; height: 48px; display: flex; color: #e6e9ee; background: linear-gradient(90deg, #1f333b 30%, #1f333d 65%, #19253f 80%); }
.start { width: 54px; background: #1a1a1a; }
.find { width: 435px; background: #f1f1f1; border-top: 2px solid #ddd; display: flex; align-items: center; gap: 13px; padding: 3px 0 0 16px; color: #555; font-size: 18px; }
.find ::placeholder { color: #555; }
.apps { display: flex; padding-left: 2px; }
.apps button { width: 58px; position: relative; }
.apps button::after { content: ""; position: absolute; left: 6px; right: 6px; bottom: 0; height: 3px; background: #76b9ed; }
.apps .idle::after { display: none; }
.apps .cur { background: #4a5b66; }
.apps .cur::after { left: 0; right: 0; }
.apps .count { position: absolute; right: 7px; bottom: 6px; width: 20px; height: 20px; border-radius: 50%; background: #c4203b; color: #fff; font-size: 14px; line-height: 20px; font-weight: 700; }
.tray { margin-left: auto; display: flex; align-items: center; gap: 12px; padding-right: 16px; }
.temp { font-size: 17px; margin-right: 10px; margin-left: -2px; }
.two { font-size: 14px; line-height: 23px; text-align: center; }
.lang { margin-right: 3px; }
.notif { position: relative; width: 44px; padding-left: 10px; margin-left: 2px; }
.notif b { position: absolute; left: 18px; top: 7px; width: 24px; height: 24px; border-radius: 50%; background: #3a3f48; border: 1px solid #888; font-size: 14px; line-height: 21px; text-align: center; }
```
